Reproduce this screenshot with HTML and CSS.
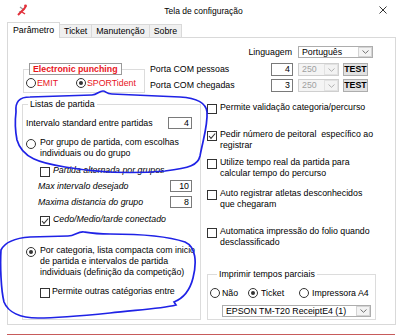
FILE: index.html
```html
<!DOCTYPE html>
<html lang="pt-br">
<head>
    <meta charset="UTF-8">
    <meta name="viewport" content="width=device-width, initial-scale=1.0">
    <title>Tela de configuração</title>
    <link rel="stylesheet" href="styles.css">
</head>
<body>
    <!-- Barra de titulo -->
    <div class="titlebar">
        <svg class="app-icon" viewBox="0 0 12 12">
            <path d="M4 3 L8 6 M3 8 L6 7" stroke="#9a9a9a" stroke-width="1.3" fill="none"/>
            <path d="M2 11 L5 8 L8 5 L10 2" stroke="#e3303a" stroke-width="2" fill="none"/>
            <path d="M6 8 L9 10" stroke="#e3303a" stroke-width="1.5" fill="none"/>
            <circle cx="9.5" cy="1.8" r="1.4" fill="#e3303a"/>
        </svg>
        <div class="title">Tela de configuração</div>
        <svg class="close" viewBox="0 0 8 8">
            <path d="M0.5 0.5 L7.5 7.5 M7.5 0.5 L0.5 7.5" stroke="#333" stroke-width="1" fill="none"/>
        </svg>
    </div>

    <!-- Abas -->
    <div class="tabs">
        <div class="tab active">Parâmetro</div>
        <div class="tab">Ticket</div>
        <div class="tab">Manutenção</div>
        <div class="tab">Sobre</div>
    </div>

    <div class="page">
        <div class="lang-row">
            <span class="lang-label">Linguagem</span>
            <div class="combo lang-combo">
                <span class="combo-text">Português</span>
                <span class="combo-btn"><svg width="7" height="4" viewBox="0 0 7 4"><path d="M0.5 0.5 L3.5 3.3 L6.5 0.5" stroke="#707070" fill="none"/></svg></span>
            </div>
        </div>

        <div class="top-row">
            <fieldset class="group punch">
                <legend>Electronic punching</legend>
                <div class="radio-row">
                    <div class="opt emit"><span class="radio"></span>EMIT</div>
                    <div class="opt"><span class="radio on"></span>SPORTident</div>
                </div>
            </fieldset>

            <div class="ports">
                <div class="port-row">
                    <span class="port-label">Porta COM pessoas</span>
                    <span class="field port-num">4</span>
                    <span class="combo off port-speed">
                        <span class="combo-text">250</span>
                        <span class="combo-btn"><svg width="7" height="4" viewBox="0 0 7 4"><path d="M0.5 0.5 L3.5 3.3 L6.5 0.5" stroke="#b0b0b0" fill="none"/></svg></span>
                    </span>
                    <span class="btn">TEST</span>
                </div>
                <div class="port-row">
                    <span class="port-label">Porta COM chegadas</span>
                    <span class="field port-num">3</span>
                    <span class="combo off port-speed">
                        <span class="combo-text">250</span>
                        <span class="combo-btn"><svg width="7" height="4" viewBox="0 0 7 4"><path d="M0.5 0.5 L3.5 3.3 L6.5 0.5" stroke="#b0b0b0" fill="none"/></svg></span>
                    </span>
                    <span class="btn">TEST</span>
                </div>
            </div>
        </div>

        <div class="main">
            <!-- Listas de partida -->
            <fieldset class="group listas">
                <legend>Listas de partida</legend>
                <div class="field-row first">
                    <span>Intervalo standard entre partidas</span>
                    <span class="field w24">4</span>
                </div>
                <div class="choice grupo">
                    <span class="radio"></span>
                    <span class="txt">Por grupo de partida, com escolhas<br>individuais ou do grupo</span>
                </div>
                <div class="choice sub alt">
                    <span class="check"></span>
                    <span class="txt it">Partida alternada por grupos</span>
                </div>
                <div class="field-row sub-field max">
                    <span class="it">Max intervalo desejado</span>
                    <span class="field">10</span>
                </div>
                <div class="field-row sub-field dist">
                    <span class="it">Maxima distancia do grupo</span>
                    <span class="field">8</span>
                </div>
                <div class="choice sub cedo">
                    <span class="check"><svg width="8" height="8" viewBox="0 0 8 8"><path d="M1 4 L3 6.3 L7.2 1.5" stroke="#333" stroke-width="1.1" fill="none"/></svg></span>
                    <span class="txt it">Cedo/Medio/tarde conectado</span>
                </div>
                <div class="choice categoria">
                    <span class="radio on"></span>
                    <span class="txt">Por categoria, lista compacta com inicio<br>de partida e intervalos de partida<br>individuais (definição da competição)</span>
                </div>
                <div class="choice sub outras">
                    <span class="check"></span>
                    <span class="txt">Permite outras catégorias entre</span>
                </div>
            </fieldset>

            <!-- Opcoes -->
            <div class="options">
                <div class="choice valida">
                    <span class="check"></span>
                    <span class="txt">Permite validação categoria/percurso</span>
                </div>
                <div class="choice pedir">
                    <span class="check"><svg width="8" height="8" viewBox="0 0 8 8"><path d="M1 4 L3 6.3 L7.2 1.5" stroke="#333" stroke-width="1.1" fill="none"/></svg></span>
                    <span class="txt">Pedir número de peitoral&nbsp; específico ao<br>registrar</span>
                </div>
                <div class="choice utilize">
                    <span class="check"></span>
                    <span class="txt">Utilize tempo real da partida para<br>calcular tempo do percurso</span>
                </div>
                <div class="choice auto">
                    <span class="check"></span>
                    <span class="txt">Auto registrar atletas desconhecidos<br>que chegaram</span>
                </div>
                <div class="choice folio">
                    <span class="check"></span>
                    <span class="txt">Automatica impressão do folio quando<br>desclassificado</span>
                </div>

                <fieldset class="group print">
                    <legend>Imprimir tempos parciais</legend>
                    <div class="radio-row">
                        <div class="opt nao"><span class="radio"></span>Não</div>
                        <div class="opt ticket"><span class="radio on"></span>Ticket</div>
                        <div class="opt"><span class="radio"></span>Impressora A4</div>
                    </div>
                    <div class="combo printer">
                        <span class="combo-text">EPSON TM-T20 ReceiptE4 (1)</span>
                        <span class="combo-btn"><svg width="7" height="4" viewBox="0 0 7 4"><path d="M0.5 0.5 L3.5 3.3 L6.5 0.5" stroke="#707070" fill="none"/></svg></span>
                    </div>
                </fieldset>
            </div>
        </div>
    </div>

    <div class="redline"></div>

    <!-- Marcas de caneta azul -->
    <svg class="ink" width="400" height="335" viewBox="0 0 400 335">
        <path d="M16 112 C15 102 19 97 30 97 L92 95 C97 95 99 91 103 91 C106 91 106 94 112 94 L180 97 C196 98 206 102 207 112 C208 125 203 140 200 156 C198 165 190 168 165 171 C130 174 100 173 65 167 C40 163 22 158 17 140 C15 130 15 120 16 112 Z" stroke="#1f22e6" stroke-width="1.7" fill="none"/>
        <path d="M1 250 C5 242 15 238 30 237 L68 236 C75 236 78 231 84 232 C90 233 95 234 110 234 C140 234 170 237 185 242 C196 247 197 262 193 278 C190 290 184 298 174 302 L176 305 C160 309 135 310 110 313 C80 316 55 318 38 318 C20 318 8 312 4 302 C1 290 0 265 1 250 Z" stroke="#1f22e6" stroke-width="1.7" fill="none"/>
    </svg>
</body>
</html>
```

FILE: styles.css
```css
/* Tela de configuracao - estilo janela Windows */
* {
    box-sizing: border-box;
}

body {
    margin: 0;
    width: 400px;
    height: 335px;
    overflow: hidden;
    position: relative;
    background-color: #fff;
    font-family: "Liberation Sans", Arial, sans-serif;
    font-size: 8.8px;
    line-height: 11px;
    color: #000;
}

/* Barra de titulo */
.titlebar {
    display: flex;
    align-items: center;
    height: 22px;
}

.app-icon {
    width: 12px;
    height: 12px;
    margin-left: 16px;
    margin-bottom: 2px;
}

.title {
    flex: 1;
    text-align: center;
    font-size: 8.5px;
}

.close {
    width: 8px;
    height: 8px;
    margin-right: 13px;
    margin-bottom: 2px;
}

/* Abas */
.tabs {
    display: flex;
    align-items: flex-end;
    height: 15px;
    padding-left: 7px;
}

.tab {
    height: 13px;
    padding: 0 4px;
    margin-right: -1px;
    border: 1px solid #d9d9d9;
    border-bottom: none;
    background-color: #f0f0f0;
    line-height: 12px;
}

.tab.active {
    position: relative;
    z-index: 1;
    height: 16px;
    margin-bottom: -1px;
    padding: 0 5px;
    background-color: #fff;
    line-height: 14px;
}

.page {
    margin-left: 7px;
    width: 389px;
    height: 288px;
    border: 1px solid #d9d9d9;
    background-color: #fff;
}

/* Linguagem */
.lang-row {
    display: flex;
    justify-content: flex-end;
    align-items: center;
    height: 12px;
    margin-top: 8px;
    padding-right: 22px;
}

.lang-label {
    margin-right: 6px;
}

.combo {
    display: flex;
    align-items: stretch;
    height: 12px;
    border: 1px solid #adadad;
    background-color: #fff;
}

.combo-text {
    flex: 1;
    padding-left: 3px;
    line-height: 10px;
    white-space: nowrap;
    overflow: hidden;
}

.combo-btn {
    display: flex;
    align-items: center;
    justify-content: center;
    width: 14px;
    border: 1px solid #d4d4d4;
    background-color: #f3f3f3;
}

.lang-combo {
    width: 75px;
}

.combo.off {
    border-color: #cfcfcf;
    background-color: #f4f4f4;
    color: #a0a0a0;
}

.combo.off .combo-btn {
    border-color: #e2e2e2;
}

/* Grupos */
.top-row {
    display: flex;
    align-items: flex-start;
    margin-top: 5px;
}

.group {
    margin: 0;
    min-width: 0;
    border: 1px solid #dcdcdc;
    padding: 0 0 0 3px;
}

.group legend {
    padding: 0 2px;
    margin-left: 2px;
    line-height: 10px;
}

.punch {
    margin-left: 15px;
    width: 122px;
    height: 30px;
    padding-left: 2px;
}

.punch legend {
    margin-left: 3px;
    padding: 0 3px;
    border: 1px solid #9a9a9a;
    background-color: #fff;
    color: #e8141c;
    font-weight: bold;
}

.radio-row {
    display: flex;
    align-items: center;
    height: 10px;
    margin-top: 3px;
}

.opt {
    display: flex;
    align-items: center;
    white-space: nowrap;
}

.punch .opt {
    color: #e8141c;
}

.punch .radio {
    margin-right: 1px;
}

.emit {
    width: 50px;
}

.radio {
    display: flex;
    align-items: center;
    justify-content: center;
    flex: none;
    width: 10px;
    height: 10px;
    margin-right: 2px;
    border: 1px solid #333;
    border-radius: 50%;
    background-color: #fff;
}

.radio.on::after {
    content: "";
    width: 4px;
    height: 4px;
    border-radius: 50%;
    background-color: #333;
}

.check {
    display: flex;
    align-items: center;
    justify-content: center;
    flex: none;
    width: 10px;
    height: 10px;
    border: 1px solid #333;
    background-color: #fff;
}

/* Portas COM */
.ports {
    display: flex;
    flex-direction: column;
    gap: 3px;
    margin-left: 5px;
}

.port-row {
    display: flex;
    align-items: center;
    height: 13px;
}

.port-label {
    width: 121px;
}

.field {
    width: 22px;
    height: 12px;
    padding-right: 2px;
    border: 1px solid #7a7a7a;
    background-color: #fff;
    text-align: right;
    line-height: 10px;
}

.port-num {
    height: 13px;
    line-height: 11px;
}

.port-speed {
    width: 41px;
    height: 13px;
    margin-left: 5px;
}

.btn {
    width: 25px;
    height: 13px;
    margin-left: 4px;
    border: 1px solid #adadad;
    background-color: #e1e1e1;
    font-weight: bold;
    text-align: center;
    line-height: 11px;
}

/* Area principal */
.main {
    display: flex;
    align-items: flex-start;
    margin-top: 6px;
}

.listas {
    margin-left: 14px;
    width: 179px;
    height: 221px;
}

.field-row {
    display: flex;
    justify-content: space-between;
    align-items: center;
    height: 12px;
    padding-right: 8px;
}

.w24 {
    width: 24px;
}

.first {
    margin-top: 8px;
}

.sub-field {
    margin-left: 12px;
}

.max {
    margin-top: 3px;
}

.dist {
    margin-top: 4px;
}

.it {
    font-style: italic;
}

.choice {
    display: flex;
    align-items: flex-start;
}

.choice .radio {
    margin-top: 2px;
    margin-right: 4px;
}

.choice .check {
    margin-top: 2px;
    margin-right: 3px;
}

.txt {
    white-space: nowrap;
}

.sub {
    margin-left: 14px;
}

.grupo {
    margin-top: 8px;
}

.alt {
    margin-top: 6px;
}

.cedo {
    margin-top: 6px;
}

.categoria {
    margin-top: 19px;
}

.outras {
    margin-top: 8px;
}

.outras .check {
    margin-right: 2px;
}

/* Opcoes da direita */
.options {
    display: flex;
    flex-direction: column;
    width: 187px;
    margin-left: 6px;
}

.valida {
    margin-top: 3px;
}

.pedir {
    margin-top: 15px;
}

.utilize {
    margin-top: 6px;
}

.auto {
    margin-top: 9px;
}

.folio {
    margin-top: 16px;
}

.print {
    width: 169px;
    height: 51px;
    margin-top: 21px;
    padding-left: 2px;
}

.print legend {
    margin-left: 7px;
}

.print .radio-row {
    margin-top: 9px;
}

.print .radio {
    margin-right: 3px;
}

.print .nao .radio {
    margin-right: 2px;
}

.nao {
    width: 38px;
}

.ticket {
    width: 51px;
}

.printer {
    width: 149px;
    margin-top: 7px;
    margin-left: 12px;
}

.redline {
    width: 388px;
    height: 1px;
    margin-top: 9px;
    margin-left: 7px;
    background-color: #c75b5b;
}

/* Marcas de caneta por cima de tudo */
.ink {
    position: absolute;
    left: 0;
    top: 0;
    pointer-events: none;
}
```
